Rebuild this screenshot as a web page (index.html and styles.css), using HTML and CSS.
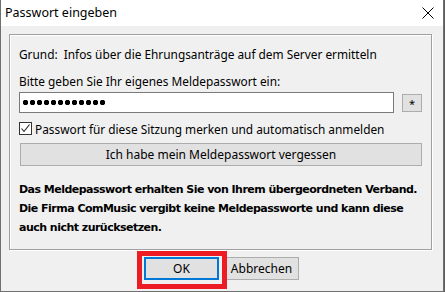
FILE: index.html
```html
<!DOCTYPE html>
<html>
  <head>
    <meta charset="utf-8">
    <title>Passwort eingeben</title>
    <link rel="stylesheet" href="styles.css">
  </head>
  <body>
    <div class="window">
      <div class="titlebar">
        <span>Passwort eingeben</span>
        <svg class="close" width="12" height="12" viewBox="0 0 12 12"><path d="M0.5 0.5 L11.5 11.5 M11.5 0.5 L0.5 11.5" stroke="#000" stroke-width="1" fill="none"/></svg>
      </div>
      <div class="client">
        <div class="panel">
          <p class="line">Grund:&nbsp; Infos über die Ehrungsanträge auf dem Server ermitteln</p>
          <p class="line gap">Bitte geben Sie Ihr eigenes Meldepasswort ein:</p>
          <div class="pwrow">
            <div class="field"><span class="dots"></span></div>
            <div class="btn star">*</div>
          </div>
          <label class="check">
            <span class="box"><svg width="11" height="11" viewBox="0 0 11 11"><path d="M1.5 5.5 L4 8.5 L9.5 1.5" stroke="#222" stroke-width="1.1" fill="none"/></svg></span>
            Passwort für diese Sitzung merken und automatisch anmelden
          </label>
          <div class="btn forgot">Ich habe mein Meldepasswort vergessen</div>
          <p class="note">Das Meldepasswort erhalten Sie von Ihrem übergeordneten Verband.<br>
          Die Firma ComMusic vergibt keine Meldepassworte und kann diese<br>
          auch nicht zurücksetzen.</p>
        </div>
        <div class="actions">
          <div class="btn action default">OK</div>
          <div class="btn action">Abbrechen</div>
          <div class="highlight"></div>
        </div>
      </div>
    </div>
  </body>
</html>
```

FILE: styles.css
```css
* {
  box-sizing: border-box;
}
html { background: #5c5c5c; }
body {
  margin: 0;
  font-family: "Noto Sans", sans-serif;
  font-size: 12px;
  color: #000;
}
.window {
  width: 444px;
  height: 292px;
  background: #f0f0f0;
  border: 1px solid #707070;
  border-top: none;
  display: flex;
  flex-direction: column;
}
.titlebar {
  height: 26px;
  background: #fff;
  display: flex;
  align-items: center;
  justify-content: space-between;
  padding: 0 9px 1px 4px;
  font-size: 12.5px;
}
.close { margin-top: 1px; }
.client {
  flex: 1;
  padding: 8px 0 0 8px;
}
.panel {
  width: 423px;
  height: 216px;
  border: 1px solid #a0a0a0;
  box-shadow: 1px 1px 0 #fff, inset 1px 1px 0 #fff;
  padding: 12px 9px 0 9px;
}
.line {
  margin: 0;
  line-height: 15px;
  height: 15px;
  white-space: nowrap;
  font-size: 11.85px;
}
.gap { margin-top: 12px; }
.pwrow {
  display: flex;
  align-items: center;
  gap: 8px;
  margin-top: 3px;
}
.field {
  width: 377px;
  height: 21px;
  background: #fff;
  border: 1px solid #7a7a7a;
  display: flex;
  align-items: center;
  padding-left: 2px;
}
.dots {
  width: 84px;
  height: 7px;
  background: radial-gradient(circle, #000 2.4px, transparent 3px) 0 0 / 7px 7px repeat-x;
}
.btn {
  background: #e1e1e1;
  border: 1px solid #adadad;
  display: flex;
  align-items: center;
  justify-content: center;
  white-space: nowrap;
}
.star {
  width: 20px;
  height: 18px;
  font-size: 11px;
  padding-top: 2px;
}
.check {
  display: flex;
  align-items: center;
  gap: 3px;
  margin-top: 8px;
  height: 15px;
  white-space: nowrap;
  font-size: 11.85px;
}
.box {
  width: 13px;
  height: 13px;
  border: 1px solid #333;
  background: #fff;
  display: flex;
  align-items: center;
  justify-content: center;
}
.forgot {
  width: 402px;
  height: 23px;
  margin: 7px 0 0 1px;
}
.note {
  margin: 14px 0 0;
  font-family: "DejaVu Sans", sans-serif;
  font-weight: bold;
  font-size: 11px;
  letter-spacing: -0.52px;
  line-height: 19px;
  white-space: nowrap;
}
.actions {
  position: relative;
  display: flex;
  justify-content: center;
  gap: 5px;
  margin: 7px 0 0 -9px;
}
.action {
  width: 75px;
  height: 23px;
}
.default {
  border: 2px solid #0078d7;
}
.highlight {
  position: absolute;
  left: 137px;
  top: -6px;
  width: 90px;
  height: 38px;
  border: 5px solid #ed1c24;
}
```
